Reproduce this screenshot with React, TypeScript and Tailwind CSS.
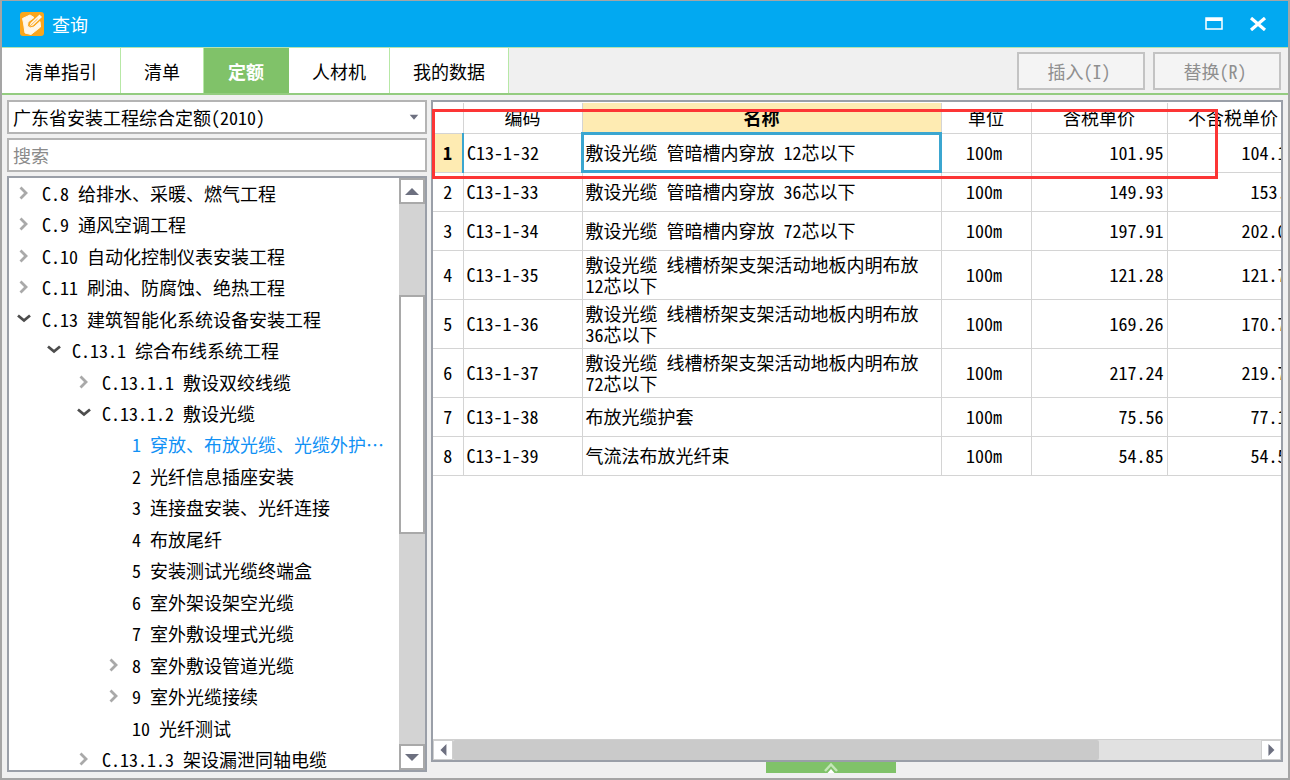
import type { ReactNode } from 'react';
import { clsx } from 'clsx';

type TreeNode = {
  label: string;
  level: number;
  state?: 'open' | 'closed';
  selected?: boolean;
};

type QuotaRow = {
  code: string;
  name: string;
  unit: string;
  taxed: string;
  untaxed: string;
};

const TABS = ['清单指引', '清单', '定额', '人材机', '我的数据'];

const TREE: TreeNode[] = [
  { label: 'C.8 给排水、采暖、燃气工程', level: 0, state: 'closed' },
  { label: 'C.9 通风空调工程', level: 0, state: 'closed' },
  { label: 'C.10 自动化控制仪表安装工程', level: 0, state: 'closed' },
  { label: 'C.11 刷油、防腐蚀、绝热工程', level: 0, state: 'closed' },
  { label: 'C.13 建筑智能化系统设备安装工程', level: 0, state: 'open' },
  { label: 'C.13.1 综合布线系统工程', level: 1, state: 'open' },
  { label: 'C.13.1.1 敷设双绞线缆', level: 2, state: 'closed' },
  { label: 'C.13.1.2 敷设光缆', level: 2, state: 'open' },
  { label: '1 穿放、布放光缆、光缆外护…', level: 3, selected: true },
  { label: '2 光纤信息插座安装', level: 3 },
  { label: '3 连接盘安装、光纤连接', level: 3 },
  { label: '4 布放尾纤', level: 3 },
  { label: '5 安装测试光缆终端盒', level: 3 },
  { label: '6 室外架设架空光缆', level: 3 },
  { label: '7 室外敷设埋式光缆', level: 3 },
  { label: '8 室外敷设管道光缆', level: 3, state: 'closed' },
  { label: '9 室外光缆接续', level: 3, state: 'closed' },
  { label: '10 光纤测试', level: 3 },
  { label: 'C.13.1.3 架设漏泄同轴电缆', level: 2, state: 'closed' },
];

const ROWS: QuotaRow[] = [
  { code: 'C13-1-32', name: '敷设光缆 管暗槽内穿放 12芯以下', unit: '100m', taxed: '101.95', untaxed: '104.15' },
  { code: 'C13-1-33', name: '敷设光缆 管暗槽内穿放 36芯以下', unit: '100m', taxed: '149.93', untaxed: '153.1' },
  { code: 'C13-1-34', name: '敷设光缆 管暗槽内穿放 72芯以下', unit: '100m', taxed: '197.91', untaxed: '202.04' },
  { code: 'C13-1-35', name: '敷设光缆 线槽桥架支架活动地板内明布放 12芯以下', unit: '100m', taxed: '121.28', untaxed: '121.72' },
  { code: 'C13-1-36', name: '敷设光缆 线槽桥架支架活动地板内明布放 36芯以下', unit: '100m', taxed: '169.26', untaxed: '170.72' },
  { code: 'C13-1-37', name: '敷设光缆 线槽桥架支架活动地板内明布放 72芯以下', unit: '100m', taxed: '217.24', untaxed: '219.72' },
  { code: 'C13-1-38', name: '布放光缆护套', unit: '100m', taxed: '75.56', untaxed: '77.16' },
  { code: 'C13-1-39', name: '气流法布放光纤束', unit: '100m', taxed: '54.85', untaxed: '54.58' },
];

const INDENT = ['pl-[7px]', 'pl-[37px]', 'pl-[67px]', 'pl-[97px]'];

const HEAD = 'border border-t-0 border-[#d4d4d4] p-0 font-normal';
const CELL = 'border border-[#d4d4d4] py-0';

function AppLogo() {
  return (
    <svg viewBox="0 0 24 24" className="size-6" aria-hidden="true">
      <rect width="24" height="24" rx="3" fill="#fba61c" />
      <path
        d="M2.5 6.5 10 3l4 2.5-6 4.5-.5 4 2.500 2 4-1 6-5.500.5 5.500-9.500 7.500L5 21 3.500 11Z"
        fill="#fff6e8"
        stroke="#fff6e8"
        strokeLinejoin="round"
      />
      <path d="m9.500 14.500 1-3.500L19.500 2.500l2.500 2.500-9 8.500Z" fill="#fff6e8" />
      <path d="m9.500 14.500 8-7.500" fill="none" stroke="#f9b44c" />
    </svg>
  );
}

function Chevron({ open }: { open: boolean }) {
  return (
    <svg viewBox="0 0 16 16" className="size-4 shrink-0" fill="none" strokeWidth="2.800" aria-hidden="true">
      {open ? <path d="M2 4.500 8 9.500l6-5" stroke="#4d4d4d" /> : <path d="m4.500 2.500 5.500 5.500-5.500 5.500" stroke="#a9a9a9" />}
    </svg>
  );
}

function Arrow({ points, className }: { points: string; className: string }) {
  return (
    <svg viewBox="0 0 14 14" className={className} aria-hidden="true">
      <polygon points={points} fill="#6d7080" />
    </svg>
  );
}

function TitleBar() {
  return (
    <header className="flex h-[46px] shrink-0 items-center bg-[#02a9f1] pr-[18px] pl-[18px] text-white">
      <AppLogo />
      <h1 className="ml-2 flex-1 text-[18px]">查询</h1>
      <button type="button" aria-label="最大化" className="flex size-6 items-center justify-center">
        <svg viewBox="0 0 18 14" className="h-3.5 w-[18px]" aria-hidden="true">
          <path d="M1 1h16v11H1z" fill="none" stroke="#fff" strokeWidth="1.500" />
          <path d="M1 1h16v3H1z" fill="#fff" />
        </svg>
      </button>
      <button type="button" aria-label="关闭" className="ml-5 flex size-6 items-center justify-center">
        <svg viewBox="0 0 18 14" className="h-3.5 w-[18px]" aria-hidden="true">
          <path d="M2 1 16 13M16 1 2 13" stroke="#fff" strokeWidth="3.200" />
        </svg>
      </button>
    </header>
  );
}

function TabBar() {
  return (
    <div className="flex h-12 shrink-0 border-t border-b-2 border-t-[#b5e3b0] border-b-[#94cc80]">
      <nav className="flex">
        {TABS.map((tab) => (
          <button
            key={tab}
            type="button"
            className={clsx(
              'border-r whitespace-nowrap',
              tab === '定额'
                ? 'border-[#80c269] bg-[#80c269] px-6 font-bold text-white'
                : 'border-[#b7e8a6] bg-white px-[23px]',
            )}
          >
            {tab}
          </button>
        ))}
      </nav>
      <div className="flex flex-1 items-center justify-end gap-2 pr-[7px]">
        <ActionButton>插入(I)</ActionButton>
        <ActionButton>替换(R)</ActionButton>
      </div>
    </div>
  );
}

function ActionButton({ children }: { children: ReactNode }) {
  return (
    <button type="button" disabled className="h-[38px] w-32 border-2 border-[#c3c3c3] bg-[#f4f4f4] pr-1 text-[#8f8f8f]">
      {children}
    </button>
  );
}

function QuotaTree() {
  return (
    <div className="flex min-h-0 flex-1 overflow-hidden border-2 border-[#9a9fa8] bg-white">
      <ul className="-mt-px -mb-[5px] flex min-w-0 flex-1 flex-col">
        {TREE.map((node) => (
          <li key={node.label} className={clsx('flex min-h-0 flex-1 items-center', INDENT[node.level])}>
            {node.state ? <Chevron open={node.state === 'open'} /> : <span className="w-4 shrink-0" />}
            <button
              type="button"
              className={clsx('ml-2 truncate pl-0.5 text-left', node.selected && 'text-[#1191f5]')}
            >
              {node.label}
            </button>
          </li>
        ))}
      </ul>
      <div className="flex w-[26px] shrink-0 flex-col bg-[#d3d3d3]">
        <button type="button" aria-label="向上滚动" className="flex h-[26px] items-center justify-center border-2 border-[#a9a9a9] bg-white">
          <Arrow points="0,11 7,4 14,11" className="size-3.5" />
        </button>
        <div className="flex-[92]" />
        <div className="flex-[238] border-2 border-[#a9a9a9] bg-white" />
        <div className="flex-[213]" />
        <button type="button" aria-label="向下滚动" className="flex h-[26px] items-center justify-center border-2 border-[#a9a9a9] bg-white">
          <Arrow points="0,4 14,4 7,11" className="size-3.5" />
        </button>
      </div>
    </div>
  );
}

function Sidebar() {
  return (
    <aside className="flex w-[420px] shrink-0 flex-col gap-1">
      <div className="relative">
        <select aria-label="定额库" className="h-[34px] w-full appearance-none border-2 border-[#b4b4b4] bg-white px-1">
          <option>广东省安装工程综合定额(2010)</option>
        </select>
        <Arrow points="1,4 13,4 7,11" className="pointer-events-none absolute top-3 right-2 size-2.5" />
      </div>
      <input
        type="text"
        aria-label="搜索"
        placeholder="搜索"
        className="h-[34px] w-full border-2 border-[#b4b4b4] bg-white px-1 placeholder:text-[#8a8a8a]"
      />
      <QuotaTree />
    </aside>
  );
}

function QuotaTable() {
  return (
    <table className="w-[866px] table-fixed border-collapse leading-[21px]">
      <thead>
        <tr className="h-[30px]">
          <th className={clsx(HEAD, 'w-[30px] border-l-0')} aria-label="序号" />
          <th className={clsx(HEAD, 'w-[119px]')}>编码</th>
          <th className="w-[359px] border border-t-0 border-[#d4d4d4] bg-[#feebb2] p-0 font-bold">名称</th>
          <th className={clsx(HEAD, 'w-[90px]')}>单位</th>
          <th className={clsx(HEAD, 'w-[136px]')}>含税单价</th>
          <th className={clsx(HEAD, 'w-[132px]')}>不含税单价</th>
        </tr>
      </thead>
      <tbody>
        {ROWS.map((row, i) => (
          <tr key={row.code} className={row.name.length > 20 ? 'h-[49px]' : 'h-[39px]'}>
            <th
              scope="row"
              className={clsx(
                'border border-l-0 border-[#d4d4d4] p-0',
                i === 0 ? 'border-r-2 border-r-[#3ba6d0] bg-[#feebb2] font-bold' : 'font-normal',
              )}
            >
              {i + 1}
            </th>
            <td className={clsx(CELL, 'px-[3px]')}>{row.code}</td>
            <td className={clsx(CELL, 'px-[3px]', i === 0 && 'outline-[3px] -outline-offset-2 outline-[#3ba6d0]')}>{row.name}</td>
            <td className={clsx(CELL, 'pr-1 text-center')}>{row.unit}</td>
            <td className={clsx(CELL, 'pr-[3px] text-right')}>{row.taxed}</td>
            <td className={clsx(CELL, 'pr-[3px] text-right')}>{row.untaxed}</td>
          </tr>
        ))}
      </tbody>
    </table>
  );
}

function HorizontalScrollbar() {
  return (
    <div className="flex h-[21px] shrink-0 border-t border-[#d0d0d0] bg-[#e1e1e1]">
      <button type="button" aria-label="向左滚动" className="flex w-5 items-center justify-center border border-[#cfcfcf] bg-white">
        <Arrow points="11,0 11,14 4,7" className="size-3" />
      </button>
      <div className="flex-[646] rounded-xs bg-[#cacaca]" />
      <div className="flex-[162]" />
      <button type="button" aria-label="向右滚动" className="flex w-5 items-center justify-center border border-[#cfcfcf] bg-white">
        <Arrow points="4,0 4,14 11,7" className="size-3" />
      </button>
    </div>
  );
}

function ResultPanel() {
  return (
    <main className="relative flex min-w-0 flex-1 flex-col">
      <div className="flex min-h-0 flex-1 flex-col border-2 border-[#9a9fa8] bg-white pt-px">
        <div className="min-h-0 flex-1 overflow-hidden">
          <QuotaTable />
        </div>
        <HorizontalScrollbar />
      </div>
      <button type="button" aria-label="展开详情" className="mr-[52px] flex h-[11px] w-[130px] items-center justify-center self-center bg-[#80c269]">
        <svg viewBox="0 0 16 11" className="h-[11px] w-4" aria-hidden="true">
          <path d="M2 9 8 2.500l6 6.500" fill="none" stroke="#c4e6b8" strokeWidth="2.500" />
          <path d="m4.500 11 3.500-4 3.500 4Z" fill="#fff" />
        </svg>
      </button>
      <div className="pointer-events-none absolute top-[9px] right-[65px] left-px h-[70px] border-[3px] border-[#fc3535]" />
    </main>
  );
}

export default function App() {
  return (
    <div className="flex h-screen flex-col overflow-hidden border-2 border-t-1 border-[#a5a5a5] bg-[#f0f0f0] font-['Noto_Sans_Mono_CJK_SC','Noto_Sans_CJK_SC',sans-serif] text-[18px] leading-6 text-black">
      <TitleBar />
      <TabBar />
      <div className="flex min-h-0 flex-1 gap-1 pt-[5px] pr-[5px] pl-[5px]">
        <div className="flex min-h-0 shrink-0 pb-[6px]">
          <Sidebar />
        </div>
        <div className="flex min-w-0 flex-1 pb-[5px]">
          <ResultPanel />
        </div>
      </div>
    </div>
  );
}
